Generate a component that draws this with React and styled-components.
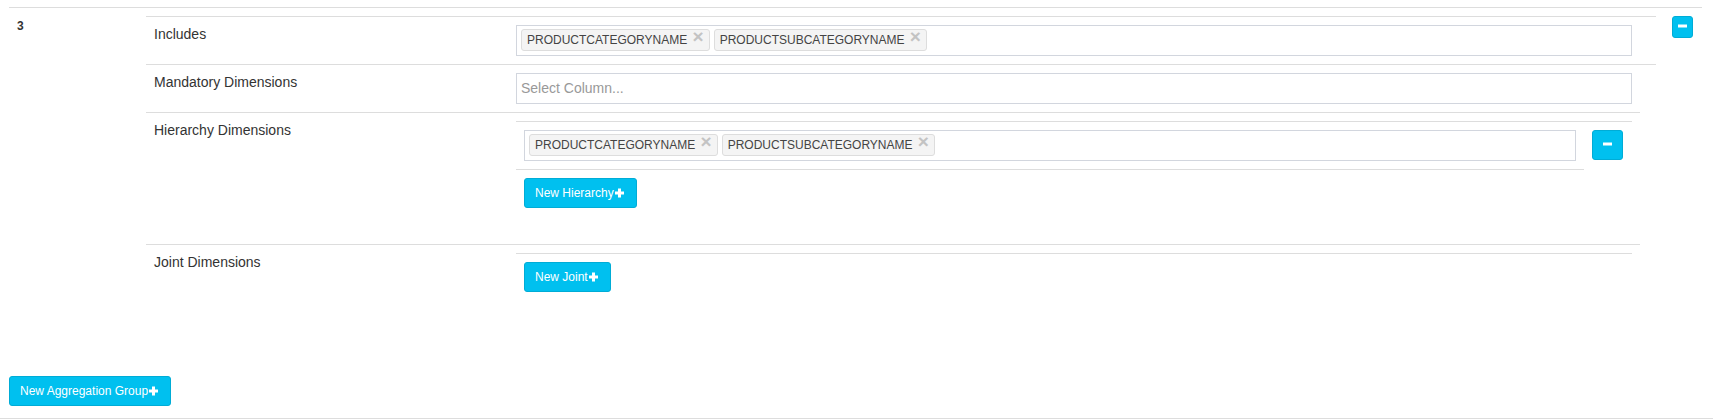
import React from "react";
import styled, { createGlobalStyle } from "styled-components";

const GlobalStyle = createGlobalStyle`
  * { box-sizing: border-box; }
  html, body {
    margin: 0;
    padding: 0;
    overflow: hidden;
    background: #fff;
  }
  body {
    font-family: "Liberation Sans", Arial, Helvetica, sans-serif;
    font-size: 14px;
    line-height: 1.42857;
    color: #333;
  }
`;

const Content = styled.div`
  padding: 7px 11px 12px 9px;
`;

const Footer = styled.div`
  border-top: 1px solid #ddd;
`;

const GroupTable = styled.div`
  margin-bottom: 20px;
`;

const GroupRow = styled.div`
  display: grid;
  grid-template-columns: 129px minmax(0, 1fr) 38px;
  border-top: 1px solid #ddd;
`;

const Cell = styled.div`
  padding: 8px;
  min-width: 0;
`;

const IndexCell = styled(Cell)`
  font-size: 12px;
  line-height: 20px;
  font-weight: 700;
`;

const DetailTable = styled.div`
  margin-bottom: 20px;
`;

const DetailRow = styled.div`
  display: grid;
  grid-template-columns: ${(p) => (p.$short ? "362px minmax(0, 1fr)" : "362px minmax(0, 1fr) 16px")};
  margin-right: ${(p) => (p.$short ? "16px" : "0")};
  border-top: 1px solid #ddd;
`;

const SubTable = styled.div`
  margin-bottom: 20px;
`;

const SubRow = styled.div`
  display: grid;
  grid-template-columns: ${(p) => (p.$action ? "minmax(0, 1fr) 48px" : "minmax(0, 1fr)")};
  margin-right: ${(p) => (p.$short ? "48px" : "0")};
  border-top: 1px solid #ddd;
`;

const TagBox = styled.div`
  display: flex;
  align-items: flex-start;
  gap: 4px;
  height: 31px;
  padding: 3px 4px 0;
  border: 1px solid #d2d6de;
  background: #fff;
`;

const Tag = styled.span`
  display: inline-block;
  padding: 1px 5px;
  font-size: 12px;
  line-height: 18px;
  color: #444;
  background: #f4f4f4;
  border: 1px solid #ddd;
  border-radius: 3px;
  white-space: nowrap;
`;

const TagClose = styled.span`
  font-size: 19px;
  font-weight: 700;
  line-height: 0;
  vertical-align: 1px;
  color: #c3c3c3;
`;

const SelectBox = styled.div`
  display: flex;
  align-items: center;
  height: 31px;
  padding: 0 4px;
  border: 1px solid #d2d6de;
  color: #999;
`;

const Button = styled.button`
  display: inline-flex;
  align-items: center;
  padding: ${(p) => (p.$size === "xs" ? "1px 5px" : "5px 10px")};
  font-family: inherit;
  font-size: 12px;
  line-height: 18px;
  color: #fff;
  background: #00c0ef;
  border: 1px solid #00acd6;
  border-radius: 3px;
  cursor: pointer;
  white-space: nowrap;
`;

const Icon = styled.svg`
  display: block;
  flex: none;
`;

function PlusIcon() {
  return (
    <Icon width="12" height="18" viewBox="0 0 12 18">
      <rect x="1" y="7.5" width="9" height="3" fill="#fff" />
      <rect x="4" y="4.5" width="3" height="9" fill="#fff" />
    </Icon>
  );
}

function MinusIcon() {
  return (
    <Icon width="9" height="18" viewBox="0 0 9 18">
      <rect x="0" y="6.5" width="9" height="3" fill="#fff" />
    </Icon>
  );
}

function Tags({ items }) {
  return (
    <TagBox>
      {items.map((t) => (
        <Tag key={t}>
          {t}
          <TagClose>{"\u00a0\u00d7"}</TagClose>
        </Tag>
      ))}
    </TagBox>
  );
}

const columns = ["PRODUCTCATEGORYNAME", "PRODUCTSUBCATEGORYNAME"];

export default function App() {
  return (
    <>
      <GlobalStyle />
      <Content>
        <GroupTable>
          <GroupRow>
            <IndexCell>3</IndexCell>
            <Cell>
              <DetailTable>
                <DetailRow>
                  <Cell>Includes</Cell>
                  <Cell>
                    <Tags items={columns} />
                  </Cell>
                  <div />
                </DetailRow>
                <DetailRow>
                  <Cell>Mandatory Dimensions</Cell>
                  <Cell>
                    <SelectBox>Select Column...</SelectBox>
                  </Cell>
                  <div />
                </DetailRow>
                <DetailRow $short>
                  <Cell>Hierarchy Dimensions</Cell>
                  <Cell>
                    <SubTable>
                      <SubRow $action>
                        <Cell>
                          <Tags items={columns} />
                        </Cell>
                        <Cell>
                          <Button>
                            <MinusIcon />
                          </Button>
                        </Cell>
                      </SubRow>
                      <SubRow $short>
                        <Cell>
                          <Button>
                            New Hierarchy
                            <PlusIcon />
                          </Button>
                        </Cell>
                      </SubRow>
                    </SubTable>
                  </Cell>
                </DetailRow>
                <DetailRow $short>
                  <Cell>Joint Dimensions</Cell>
                  <Cell>
                    <SubTable>
                      <SubRow>
                        <Cell>
                          <Button>
                            New Joint
                            <PlusIcon />
                          </Button>
                        </Cell>
                      </SubRow>
                    </SubTable>
                  </Cell>
                </DetailRow>
              </DetailTable>
            </Cell>
            <Cell>
              <Button $size="xs">
                <MinusIcon />
              </Button>
            </Cell>
          </GroupRow>
        </GroupTable>
        <Button>
          New Aggregation Group
          <PlusIcon />
        </Button>
      </Content>
      <Footer />
    </>
  );
}
